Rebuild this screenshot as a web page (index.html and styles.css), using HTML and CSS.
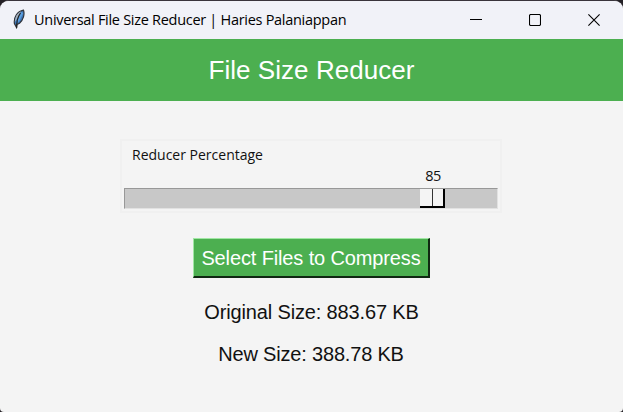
FILE: index.html
```html
<!DOCTYPE html>
<html lang="en">
<head>
<meta charset="utf-8">
<title>Universal File Size Reducer | Haries Palaniappan</title>
<link rel="stylesheet" href="styles.css">
</head>
<body>
<div class="window">
  <div class="titlebar">
    <svg class="feather" width="14" height="20" viewBox="0 0 14 20">
      <path d="M4.500 18.500 2.400 14.500C1.600 8.500 5 2.500 11.500 1.200C12.800 5 11.500 11 7.500 14.200L5 15.500Z" fill="#3f78b8" stroke="#30343c" stroke-width="1.200"/>
      <path d="M2.800 13C3 8 5.500 4 9 2.300L5.500 9Z" fill="#a9b2bc"/>
      <path d="M10.300 3.500 6 12.500" fill="none" stroke="#5b9fe0" stroke-width="2"/>
      <path d="M8.500 4C5.500 8 4.500 13 4.600 19" fill="none" stroke="#222" stroke-width="1.200"/>
    </svg>
    <span class="caption">Universal File Size Reducer | Haries Palaniappan</span>
    <div class="controls">
      <svg width="12" height="12" viewBox="0 0 12 12"><path d="M0 5.500H12"/></svg>
      <svg width="12" height="12" viewBox="0 0 12 12"><rect x=".5" y=".5" width="11" height="11" rx="1.300"/></svg>
      <svg width="12" height="12" viewBox="0 0 12 12"><path d="M.4.400 11.600 11.600M11.600.400.400 11.600"/></svg>
    </div>
  </div>
  <header class="header"><h1>File Size Reducer</h1></header>
  <main class="content">
    <div class="scale">
      <div class="scale-label">Reducer Percentage</div>
      <div class="scale-value">85</div>
      <div class="trough"><div class="thumb"></div></div>
    </div>
    <button class="select">Select Files to Compress</button>
    <p class="original">Original Size: 883.67 KB</p>
    <p class="new">New Size: 388.78 KB</p>
  </main>
</div>
</body>
</html>
```
FILE: styles.css
```css
* { box-sizing: border-box; }
html { background: #242126; }
body { margin: 0; overflow: hidden; font-family: "Liberation Sans", Arial, sans-serif; }
.window {
  width: 623px;
  height: 412px;
  border-top: 1px solid #39343b;
  border-radius: 9px 9px 4px 4px;
  background: #f4f4f4;
  overflow: hidden;
}
.titlebar {
  height: 38px;
  display: flex;
  align-items: center;
  background: #f1f2f8;
  padding: 0 23px 0 12px;
}
.feather { margin-right: 8px; margin-top: -2px; }
.caption {
  font: 14.5px/20px "Open Sans", "Noto Sans", sans-serif;
  letter-spacing: -0.29px;
  color: #000;
  white-space: nowrap;
}
.controls { margin-left: auto; display: flex; gap: 47px; }
.controls svg { display: block; fill: none; stroke: #000; stroke-width: 1.1; }
.header {
  height: 62px;
  display: flex;
  align-items: center;
  justify-content: center;
  background: #4caf50;
}
h1 { margin: 0; font-size: 26px; line-height: 30px; font-weight: 400; letter-spacing: 0.05px; color: #fff; white-space: nowrap; }
.content { display: flex; flex-direction: column; align-items: center; padding-top: 38px; }
.scale {
  width: 382px;
  height: 74px;
  margin-right: 1px;
  border: 2px solid #f0f0f0;
  padding: 4px 2px 0;
  font: 14px/20px "Open Sans", "Noto Sans", sans-serif;
  color: #111;
}
.scale-label { padding-left: 8px; }
.scale-value { width: 32px; margin-left: 293px; text-align: center; font-size: 14.5px; letter-spacing: -0.5px; line-height: 22px; margin-bottom: 1px; }
.trough {
  height: 21px;
  background: #c8c8c8;
  border: 1px solid;
  border-color: #989898 #e2e2e2 #e2e2e2 #989898;
}
.thumb {
  width: 25px;
  height: 19px;
  margin-left: 295px;
  background: linear-gradient(#333, #333) 12px 0 / 1px 100% no-repeat #f4f4f4;
  border: solid #000;
  border-width: 0 2px 2px 0;
}
.select {
  width: 237px;
  height: 40px;
  margin: 25px 0 0;
  padding: 1px 0 0;
  background: #4caf50;
  border: 2px solid;
  border-color: #a0e7a3 #102812 #102812 #a0e7a3;
  border-width: 1px 2px 2px 1px;
  color: #fff;
  font: 20px/24px "Liberation Sans", Arial, sans-serif;
  letter-spacing: -0.13px;
  white-space: nowrap;
}
p { margin: 0; font-size: 20px; line-height: 24px; letter-spacing: -0.14px; color: #111; white-space: nowrap; }
.original { margin-top: 22px; }
.new { margin-top: 18px; margin-right: 1px; letter-spacing: -0.18px; }
```
